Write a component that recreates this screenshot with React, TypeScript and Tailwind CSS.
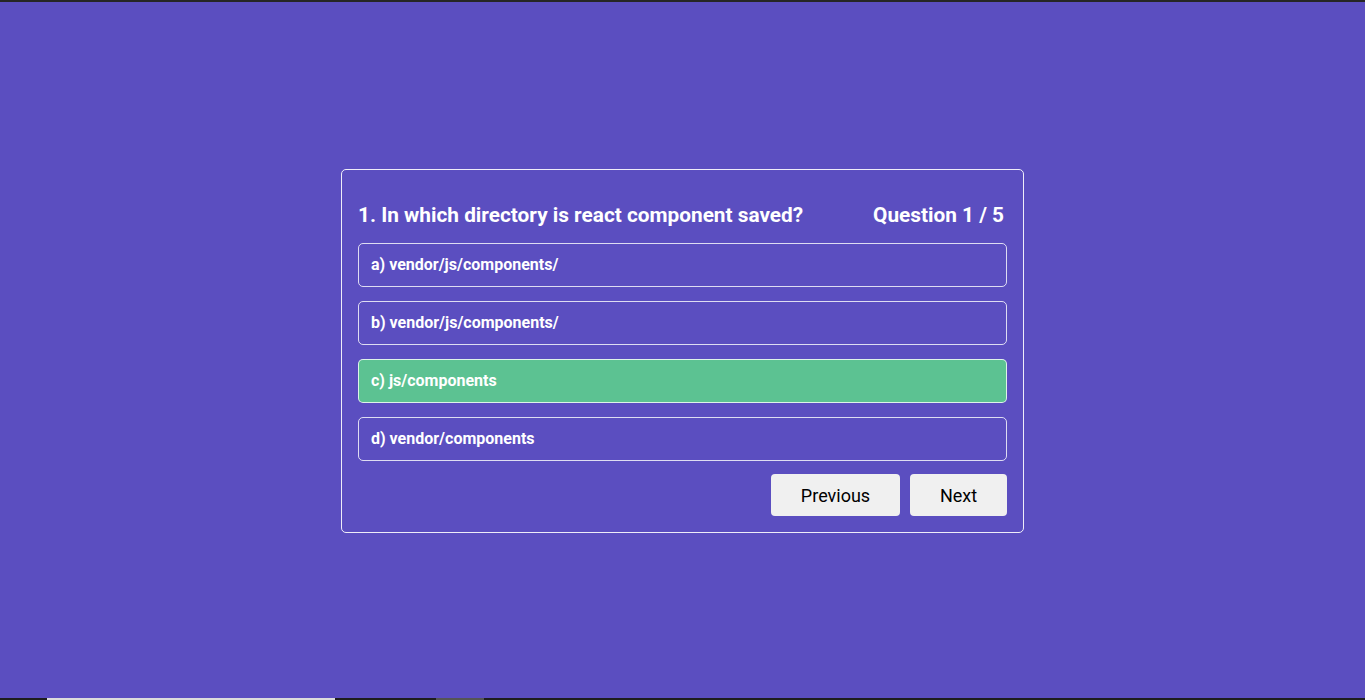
import React, { useState } from "react";

type Option = { id: string; label: string };

const question = {
  number: 1,
  total: 5,
  text: "In which directory is react component saved?",
  options: [
    { id: "a", label: "a) vendor/js/components/" },
    { id: "b", label: "b) vendor/js/components/" },
    { id: "c", label: "c) js/components" },
    { id: "d", label: "d) vendor/components" },
  ] as Option[],
};

function OptionRow({ option, selected, onSelect }: { option: Option; selected: boolean; onSelect: () => void }) {
  return (
    <button
      onClick={onSelect}
      className={
        selected
          ? "w-full h-[44px] rounded-[5px] border border-white/80 bg-[#5cc292] pl-3 pr-3 text-left text-[16px] font-bold text-white"
          : "w-full h-[44px] rounded-[5px] border border-white/80 bg-transparent pl-3 pr-3 text-left text-[16px] font-bold text-white"
      }
    >
      {option.label}
    </button>
  );
}

export default function App() {
  const [selected, setSelected] = useState("c");

  return (
    <div className="h-[700px] w-full flex flex-col bg-[#5b4ec0] font-['Roboto','Liberation_Sans',sans-serif] overflow-hidden">
      <div className="h-[2px] bg-[#262626]" />
      <main className="flex-1 flex items-center justify-center pt-[2px]">
        <div className="w-[683px] rounded-[5px] border border-white/90 px-4 pt-[31px] pb-4">
          <div className="flex items-center justify-between h-[29px] pr-[3px]">
            <h2 className="text-[20.8px] font-bold text-white">
              {question.number}. {question.text}
            </h2>
            <span className="text-[20.8px] font-bold text-white">
              Question {question.number} / {question.total}
            </span>
          </div>
          <div className="mt-[13px] flex flex-col gap-[14px]">
            {question.options.map((o) => (
              <OptionRow key={o.id} option={o} selected={selected === o.id} onSelect={() => setSelected(o.id)} />
            ))}
          </div>
          <div className="mt-[13px] flex justify-end gap-[10px]">
            <button className="h-[42px] w-[129px] rounded-[4px] bg-[#f0f0f0] text-[18px] text-black">Previous</button>
            <button className="h-[42px] w-[97px] rounded-[4px] bg-[#f0f0f0] text-[18px] text-black">Next</button>
          </div>
        </div>
      </main>
      <div className="h-[2px] bg-[#1e1e1e] flex">
        <div className="w-[47px]" />
        <div className="w-[288px] bg-[#dcdcdc]" />
        <div className="w-[101px]" />
        <div className="w-[48px] bg-[#555555]" />
      </div>
    </div>
  );
}
